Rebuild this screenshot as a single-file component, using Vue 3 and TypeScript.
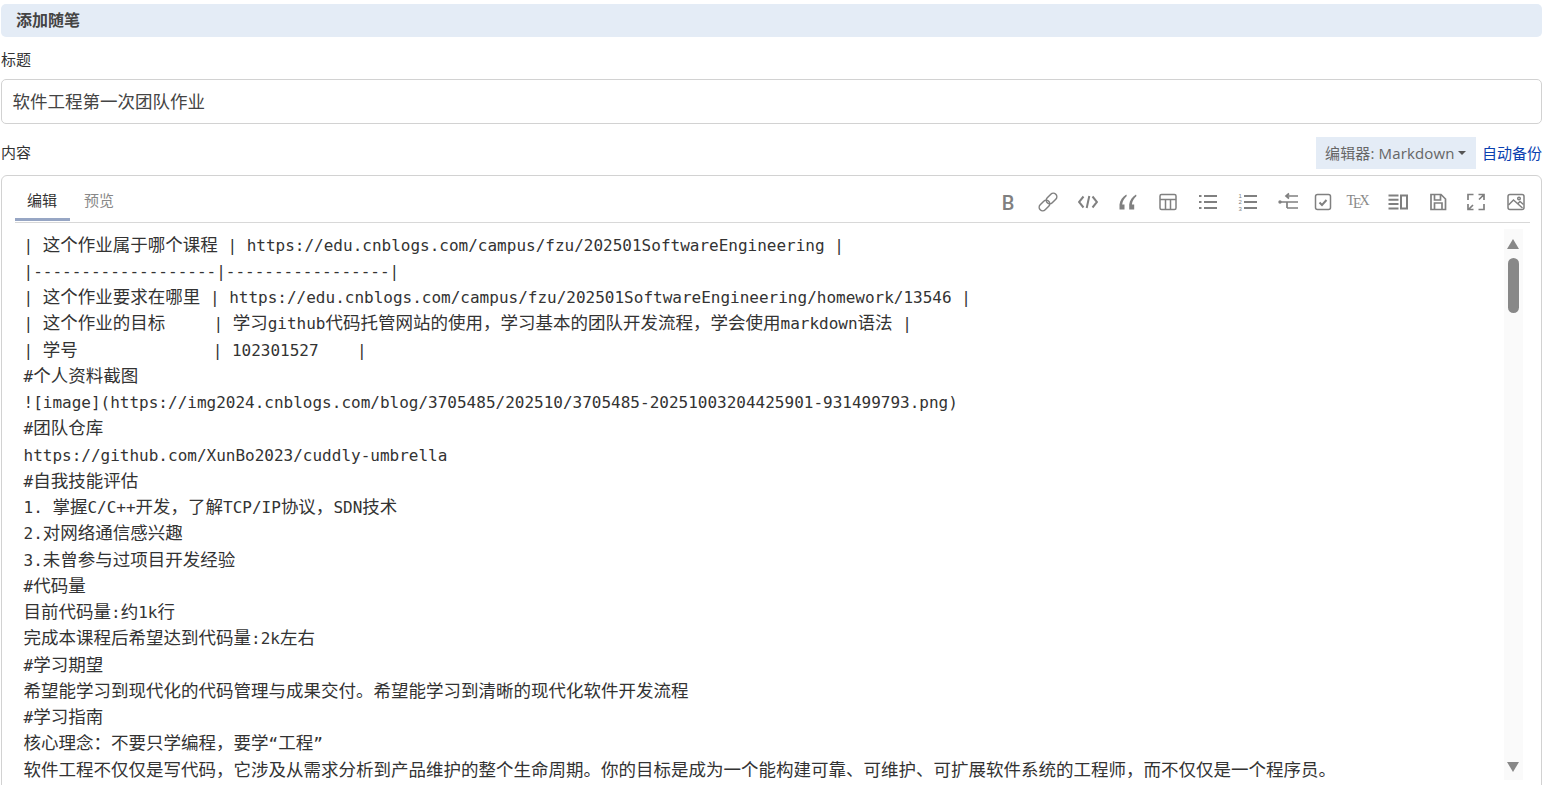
<script setup lang="ts">
const lines: string[] = [
  '| 这个作业属于哪个课程 | https://edu.cnblogs.com/campus/fzu/202501SoftwareEngineering |',
  '|-------------------|-----------------|',
  '| 这个作业要求在哪里 | https://edu.cnblogs.com/campus/fzu/202501SoftwareEngineering/homework/13546 |',
  '| 这个作业的目标     | 学习github代码托管网站的使用，学习基本的团队开发流程，学会使用markdown语法 |',
  '| 学号              | 102301527    |',
  '#个人资料截图',
  '![image](https://img2024.cnblogs.com/blog/3705485/202510/3705485-20251003204425901-931499793.png)',
  '#团队仓库',
  'https://github.com/XunBo2023/cuddly-umbrella',
  '#自我技能评估',
  '1. 掌握C/C++开发，了解TCP/IP协议，SDN技术',
  '2.对网络通信感兴趣',
  '3.未曾参与过项目开发经验',
  '#代码量',
  '目前代码量:约1k行',
  '完成本课程后希望达到代码量:2k左右',
  '#学习期望',
  '希望能学习到现代化的代码管理与成果交付。希望能学习到清晰的现代化软件开发流程',
  '#学习指南',
  '核心理念：不要只学编程，要学“工程”',
  '软件工程不仅仅是写代码，它涉及从需求分析到产品维护的整个生命周期。你的目标是成为一个能构建可靠、可维护、可扩展软件系统的工程师，而不仅仅是一个程序员。',
  '',
]

interface Seg { text: string; latin: boolean }

function split(line: string): Seg[] {
  const parts = line.match(/[\x00-\x7f\u201c\u201d]+|[^\x00-\x7f\u201c\u201d]+/g) ?? []
  return parts.map((text) => ({ text, latin: /^[\x00-\x7f\u201c\u201d]/.test(text) }))
}

const rows = lines.map(split)
</script>

<template>
  <div class="page" lang="zh-CN">
    <div class="bar">添加随笔</div>
    <div class="label title-label">标题</div>
    <div class="input">软件工程第一次团队作业</div>
    <div class="content-head">
      <div class="label">内容</div>
      <div class="head-right">
        <div class="select">编辑器: Markdown<span class="caret"></span></div>
        <a class="backup">自动备份</a>
      </div>
    </div>
    <div class="editor">
      <div class="editor-head">
        <div class="tabs">
          <div class="tab active">编辑</div>
          <div class="tab">预览</div>
        </div>
        <div class="tools">
          <span class="tool bold">B</span>
          <span class="tool">
            <svg viewBox="0 0 20 20"><g transform="rotate(-45 10 10)"><rect x="-1" y="6.500" width="12" height="7" rx="3.500"/><rect x="9" y="6.500" width="12" height="7" rx="3.500"/></g></svg>
          </span>
          <span class="tool">
            <svg viewBox="0 0 20 20" class="thick"><path d="M5.500 4.500 1 10l4.500 5.500M14.500 4.500 19 10l-4.500 5.500M11.300 4 8.700 16"/></svg>
          </span>
          <span class="tool">
            <svg viewBox="0 0 20 20" class="fill"><path d="M8.300 2.500C4.500 5 2 8 1.500 12.500V17.500h5v-5H4.200C4.600 9 6 7 8.800 4zM18 2.500C14.200 5 11.700 8 11.200 12.500V17.500h5v-5h-2.300c.4-3.500 1.800-5.500 4.600-8.500z"/></svg>
          </span>
          <span class="tool">
            <svg viewBox="0 0 20 20"><rect x="2" y="2.500" width="16" height="15" rx="1.500"/><path d="M2 7.500h16M7.500 7.500v10M12.500 7.500v10"/></svg>
          </span>
          <span class="tool">
            <svg viewBox="0 0 20 20" class="thick"><path d="M6 4h13M6 10h13M6 16h13M1 4h2.500M1 10h2.500M1 16h2.500"/></svg>
          </span>
          <span class="tool">
            <svg viewBox="0 0 20 20"><path class="heavy" d="M6 4h13M6 10h13M6 16h13"/><text x="0.500" y="6" class="tiny">1</text><text x="0.500" y="12" class="tiny">2</text><text x="0.500" y="18.500" class="tiny">3</text></svg>
          </span>
          <span class="tool">
            <svg viewBox="0 0 20 20" class="mid"><path d="M11 1.500 8 4l3 2.500M8.500 4H20M2 10h18M9 10v6M9 16h11"/><circle cx="2" cy="10" r="1.700" class="dot"/></svg>
          </span>
          <span class="tool tight">
            <svg viewBox="0 0 20 20"><rect x="2.500" y="2.500" width="15" height="15" rx="2"/><path class="heavy" d="m6.500 10.500 2.500 2.500 4.500-5"/></svg>
          </span>
          <span class="tool tight tex">T<span class="tex-e">E</span>X</span>
          <span class="tool">
            <svg viewBox="0 0 20 20" class="thick"><path d="M0.500 3.500h10M0.500 7.800h10M0.500 12.100h10M0.500 16.500h10"/><rect x="13" y="3.500" width="6" height="13"/></svg>
          </span>
          <span class="tool">
            <svg viewBox="0 0 20 20"><path class="mid-path" d="M3 2.500h10l4.500 4.500v10.500H3zM6.500 2.500v5.500h6V2.500M6.500 17.500v-6.500h7.500v6.500"/></svg>
          </span>
          <span class="tool near">
            <svg viewBox="0 0 20 20" class="mid"><path d="M7.500 2.500H2v5.500M12.500 2.500H18v5.500M2 12v5.500h5.500M18 12v5.500h-5.500M17.500 3l-4.500 4.500M7 13l-4.500 4.500"/></svg>
          </span>
          <span class="tool">
            <svg viewBox="0 0 20 20"><rect x="2" y="2.500" width="16" height="15" rx="2"/><path d="m2.500 13 5-5 9 8M11.500 12l2.500-2.500 3.500 3"/><circle cx="13" cy="6.500" r="1.300"/></svg>
          </span>
        </div>
      </div>
      <div class="editor-body">
        <div class="code">
          <div v-for="(row, i) in rows" :key="i" class="code-line">
            <span v-for="(seg, j) in row" :key="j" :class="seg.latin ? 'latin' : 'cjk'">{{ seg.text }}</span>
          </div>
        </div>
        <div class="scroll">
          <span class="arrow up"></span>
          <span class="thumb"></span>
          <span class="arrow down"></span>
        </div>
      </div>
    </div>
  </div>
</template>

<style scoped>
.page {
  box-sizing: border-box;
  height: 785px;
  padding: 4px 1px 0;
  overflow: hidden;
  font-family: "Noto Sans CJK SC", "Open Sans", sans-serif;
  font-size: 15px;
  color: #333;
  background: #fff;
}
.bar {
  height: 33px;
  line-height: 31px;
  padding-left: 15px;
  background: #e4ecf6;
  border-radius: 5px;
  font-size: 16px;
  font-weight: 700;
  color: #444;
}
.label {
  font-size: 15px;
  line-height: 20px;
  padding-bottom: 2px;
  color: #333;
}
.title-label {
  margin-top: 12px;
}
.input {
  box-sizing: border-box;
  height: 45px;
  margin-top: 8px;
  padding-left: 10.500px;
  line-height: 41px;
  border: 1px solid #d2d2d2;
  border-radius: 5px;
  font-size: 17.500px;
  color: #444;
}
.content-head {
  display: flex;
  align-items: center;
  justify-content: space-between;
  margin-top: 13px;
}
.head-right {
  display: flex;
  align-items: center;
  gap: 6px;
}
.select {
  display: flex;
  align-items: center;
  box-sizing: border-box;
  width: 160px;
  height: 32px;
  padding: 0 0 2px 9px;
  background: #e4ecf6;
  color: #666;
  font-family: "Open Sans", "Noto Sans CJK SC", sans-serif;
  font-size: 15px;
  letter-spacing: 0.150px;
}
.caret {
  width: 0;
  height: 0;
  margin: 2px 0 0 3px;
  border-top: 4px solid #555;
  border-left: 4px solid transparent;
  border-right: 4px solid transparent;
}
.backup {
  padding-bottom: 2px;
  font-size: 15px;
  color: #0a3fb0;
}
.editor {
  box-sizing: border-box;
  height: 640px;
  margin-top: 6px;
  padding: 0 11px 0 13px;
  border: 1px solid #d2d2d2;
  border-radius: 6px;
}
.editor-head {
  display: flex;
  align-items: stretch;
  justify-content: space-between;
  height: 46px;
  border-bottom: 1px solid #d8d8d8;
}
.tabs {
  display: flex;
  align-items: flex-end;
  gap: 2px;
}
.tab {
  box-sizing: border-box;
  flex: none;
  height: 30px;
  margin-bottom: 1px;
  padding: 0 13px 0 12px;
  line-height: 18px;
  font-size: 15px;
  color: #888;
  border-bottom: 3px solid transparent;
}
.tab.active {
  color: #333;
  border-bottom-color: #97a6c4;
}
.tools {
  display: flex;
  align-items: center;
  gap: 12px;
  padding-top: 6px;
  color: #808080;
}
.tool {
  display: flex;
  align-items: center;
  justify-content: center;
  width: 28px;
  height: 20px;
}
.tight {
  margin-left: -5px;
}
.near {
  margin-left: -2px;
}
.bold {
  font-family: Roboto, "Liberation Sans", sans-serif;
  font-weight: 500;
  font-size: 20px;
  padding-top: 1px;
}
.tex {
  font-family: "Liberation Serif", serif;
  font-size: 14px;
  line-height: 20px;
  padding-bottom: 3px;
  box-sizing: border-box;
  color: #888;
}
.tex-e {
  margin: 0 -2px;
  position: relative;
  top: 3px;
}
svg {
  width: 20px;
  height: 20px;
  fill: none;
  stroke: #808080;
  stroke-width: 1.500;
}
svg.thick,
.heavy {
  stroke-width: 2;
}
svg.mid,
.mid-path {
  stroke-width: 1.700;
}
svg.fill {
  fill: #808080;
  stroke: none;
}
.dot {
  fill: #808080;
  stroke: none;
}
.tiny {
  font-family: "Liberation Sans", sans-serif;
  font-size: 6px;
  fill: #808080;
  stroke: none;
}
.editor-body {
  display: flex;
  justify-content: space-between;
  height: 600px;
}
.code {
  flex: 1;
  min-width: 0;
  padding: 7.500px 0 0 8.500px;
  overflow: hidden;
}
.code-line {
  height: 26.250px;
  line-height: 26.250px;
  white-space: pre;
  color: #333;
  font-size: 17.500px;
}
.latin {
  font-family: "DejaVu Sans Mono", "Liberation Mono", monospace;
  font-size: 16px;
}
.cjk {
  font-family: "Noto Sans CJK SC", sans-serif;
}
.scroll {
  position: relative;
  flex: none;
  width: 19px;
  height: 551px;
  margin: 6px 7px 0 0;
  background: #fafafa;
}
.thumb {
  position: absolute;
  top: 29px;
  left: 4px;
  width: 11px;
  height: 55px;
  border-radius: 6px;
  background: #888;
}
.arrow {
  position: absolute;
  left: 3px;
  width: 0;
  height: 0;
  border-left: 6.500px solid transparent;
  border-right: 6.500px solid transparent;
}
.up {
  top: 10px;
  border-bottom: 10px solid #888;
}
.down {
  top: 533px;
  border-top: 10px solid #888;
}
</style>

<style>
html,
body {
  margin: 0;
  overflow: hidden;
}
</style>
